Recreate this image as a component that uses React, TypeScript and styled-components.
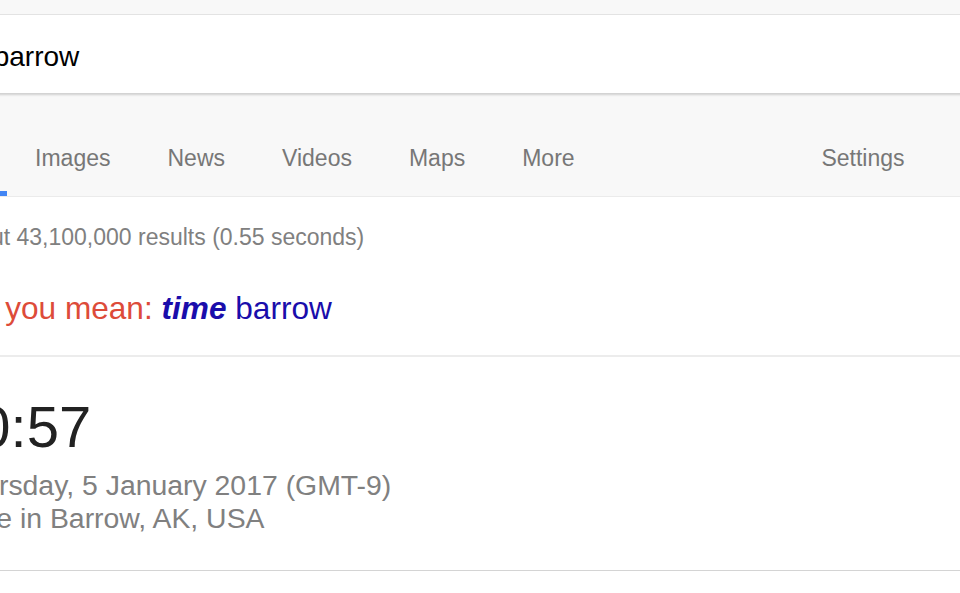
import React from "react";
import styled, { createGlobalStyle } from "styled-components";

const Global = createGlobalStyle`
  html, body {
    margin: 0;
    padding: 0;
    overflow: hidden;
    background: #ffffff;
    font-family: "Liberation Sans", Arial, Helvetica, sans-serif;
  }
  #root { width: 960px; }
`;

const Header = styled.header`
  background: #f8f8f8;
  padding-top: 14px;
`;

const SearchBox = styled.div`
  margin-left: -100px;
  width: 1200px;
  height: 78px;
  box-sizing: content-box;
  border-top: 1px solid #e3e3e3;
  background: #ffffff;
  box-shadow: 0 2px 2px rgba(0, 0, 0, 0.16);
  display: flex;
  align-items: center;
  padding-left: 33px;
  position: relative;
  z-index: 1;
`;

const Query = styled.span`
  font-size: 28px;
  line-height: 32px;
  padding-top: 5px;
  color: #000000;
`;

const Nav = styled.nav`
  display: flex;
  align-items: flex-end;
  padding-top: 51px;
  padding-right: 27px;
  border-bottom: 1px solid #ebebeb;
`;

const Tab = styled.span<{ $active?: boolean; $push?: boolean }>`
  flex: none;
  font-size: 23px;
  line-height: 28px;
  color: #777777;
  padding: 0 28.5px 19px;
  border-bottom: 5px solid ${(p) => (p.$active ? "#4285f4" : "transparent")};
  margin-left: ${(p) => (p.$push ? "auto" : "0")};
  &:first-child {
    margin-left: -76px;
  }
`;

const Main = styled.main`
  background: #ffffff;
`;

const Column = styled.div`
  margin-left: -50px;
`;

const Stats = styled.div`
  margin-top: 26px;
  font-size: 23px;
  line-height: 28px;
  color: #808080;
  white-space: nowrap;
`;

const DidYouMean = styled.div`
  margin-top: 39px;
  margin-left: -1px;
  font-size: 31.6px;
  line-height: 36px;
  white-space: nowrap;
  color: #dd4b39;
`;

const Suggestion = styled.a`
  color: #1a0dab;
  text-decoration: none;
`;

const Corrected = styled.b`
  font-style: italic;
  font-weight: bold;
`;

const Card = styled.section`
  margin-top: 29px;
  margin-left: -30px;
  width: 1200px;
  background: #ffffff;
  border-top: 2px solid #ececec;
  border-bottom: 1px solid #d4d4d4;
  box-shadow: 0 2px 2px rgba(0, 0, 0, 0.14);
  padding: 36px 0 35px 30px;
`;

const Time = styled.div`
  font-size: 58px;
  line-height: 68px;
  color: #222222;
  margin-left: -4px;
`;

const Detail = styled.div<{ $first?: boolean }>`
  font-size: 28.4px;
  line-height: 33px;
  color: #808080;
  white-space: nowrap;
  margin-top: ${(p) => (p.$first ? "8px" : "0")};
`;

const tabs = ["All", "Images", "News", "Videos", "Maps", "More"];

export default function App() {
  return (
    <>
      <Global />
      <Header>
        <SearchBox>
          <Query>tiem barrow</Query>
        </SearchBox>
        <Nav>
          {tabs.map((t, i) => (
            <Tab key={t} $active={i === 0}>
              {t}
            </Tab>
          ))}
          <Tab $push>Settings</Tab>
        </Nav>
      </Header>
      <Main>
        <Column>
          <Stats>About 43,100,000 results (0.55 seconds)</Stats>
          <DidYouMean>
            Did you mean:{" "}
            <Suggestion href="#">
              <Corrected>time</Corrected> barrow
            </Suggestion>
          </DidYouMean>
          <Card>
            <Time>10:57</Time>
            <Detail $first>Thursday, 5 January 2017 (GMT-9)</Detail>
            <Detail>Time in Barrow, AK, USA</Detail>
          </Card>
        </Column>
      </Main>
    </>
  );
}
